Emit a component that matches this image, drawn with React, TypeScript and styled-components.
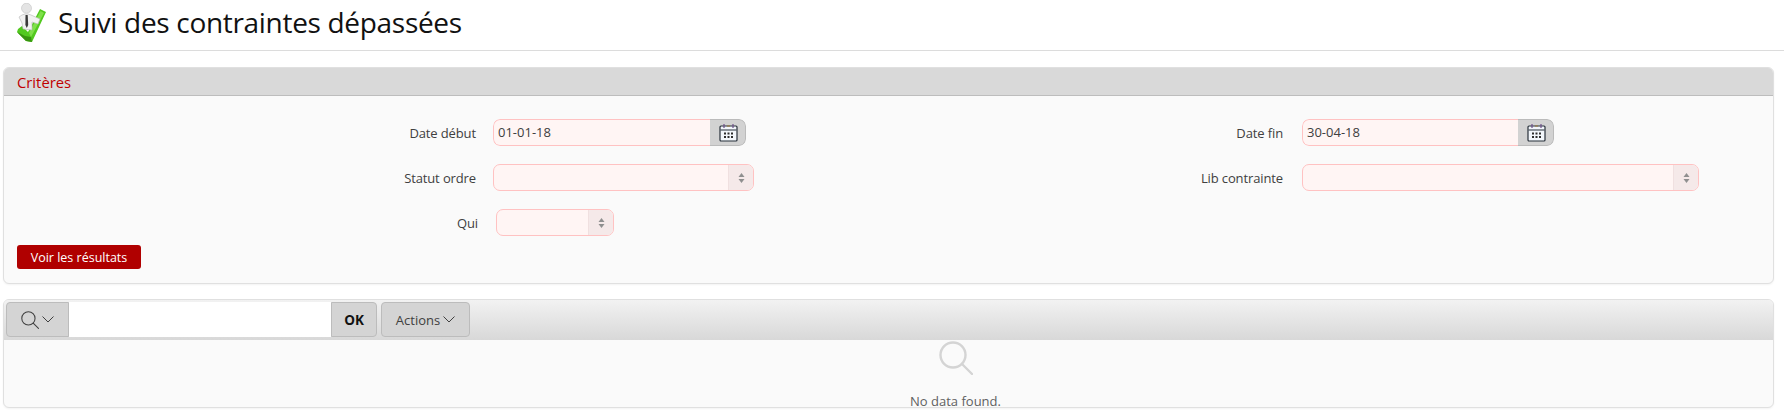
import React from 'react';
import styled, { createGlobalStyle } from 'styled-components';

const GlobalStyle = createGlobalStyle`
  html, body {
    margin: 0;
    padding: 0;
    background: #fff;
  }
  body {
    font-family: "Open Sans", "Noto Sans", "Liberation Sans", sans-serif;
    color: #404040;
  }
`;

const Page = styled.div`
  width: 1784px;
  height: 416px;
  overflow: hidden;
`;

const TitleBar = styled.header`
  height: 50px;
  border-bottom: 1px solid #dcdcdc;
  display: flex;
  align-items: flex-start;
  padding-left: 17px;
  gap: 11px;
`;

const LogoSlot = styled.div`
  margin-top: 3px;
  height: 40px;
`;

const Title = styled.h1`
  margin: 3px 0 0;
  font-size: 28px;
  line-height: 38px;
  font-weight: 400;
  color: #111;
  letter-spacing: -0.31px;
`;

const Content = styled.main`
  padding: 16px 10px 0 3px;
  display: flex;
  flex-direction: column;
  gap: 15px;
`;

const Panel = styled.section`
  background: #fafafa;
  border: 1px solid #e0e0e0;
  border-radius: 6px;
  box-shadow: 0 1px 2px rgba(0, 0, 0, 0.05);
`;

const PanelHeader = styled.div`
  height: 27px;
  background: #d9d9d9;
  border-bottom: 1px solid #bdbdbd;
  border-radius: 5px 5px 0 0;
  display: flex;
  align-items: center;
  padding-left: 13px;
`;

const PanelTitle = styled.h2`
  margin: 0;
  font-size: 14.8px;
  font-weight: 400;
  color: #c00000;
`;

const FormBody = styled.div`
  padding: 23px 0 14px;
  display: flex;
  flex-direction: column;
`;

const FormGrid = styled.div`
  display: grid;
  grid-template-columns: 809px 1fr;
  row-gap: 18px;
`;

const Field = styled.div<{ $labelWidth: number; $gap: number }>`
  display: grid;
  grid-template-columns: ${p => p.$labelWidth}px auto 1fr;
  column-gap: ${p => p.$gap}px;
  align-items: center;
  height: 27px;
`;

const FieldLabel = styled.label`
  font-size: 13px;
  letter-spacing: -0.12px;
  color: #404040;
  text-align: right;
`;

const DateBox = styled.div<{ $inputWidth: number }>`
  display: flex;
  height: 27px;
  width: ${p => p.$inputWidth + 36}px;
  box-sizing: border-box;
  border-radius: 7px;
  overflow: hidden;
`;

const DateInput = styled.div`
  flex: 1;
  box-sizing: border-box;
  background: #fff5f4;
  border: 1px solid #ffc2c2;
  border-right: none;
  border-radius: 7px 0 0 7px;
  padding-left: 4px;
  font-size: 13px;
  line-height: 25px;
  color: #404040;
`;

const CalendarButton = styled.div`
  width: 36px;
  box-sizing: border-box;
  background: #d2d2d2;
  border: 1px solid #bbb;
  border-left: none;
  border-radius: 0 7px 7px 0;
  padding-left: 1px;
  display: flex;
  align-items: center;
  justify-content: center;
`;

const SelectBox = styled.div<{ $width: number }>`
  display: flex;
  justify-content: flex-end;
  height: 27px;
  width: ${p => p.$width}px;
  box-sizing: border-box;
  background: #fff5f4;
  border: 1px solid #ffc2c2;
  border-radius: 7px;
  overflow: hidden;
`;

const SelectArrow = styled.div`
  width: 24px;
  background: #f5e9e9;
  border-left: 1px solid #f0e0e0;
  display: flex;
  align-items: center;
  justify-content: center;
`;

const PrimaryButton = styled.button`
  align-self: flex-start;
  margin: 9px 0 0 13px;
  width: 124px;
  height: 24px;
  padding: 0;
  border: none;
  border-radius: 3px;
  background: #b00000;
  color: #fff;
  font-family: inherit;
  font-size: 12.5px;
`;

const Toolbar = styled.div`
  height: 35px;
  padding: 2px 0 3px 2px;
  background: linear-gradient(#f2f2f2, #d8d8d8);
  border-radius: 5px 5px 0 0;
  display: flex;
  align-items: stretch;
`;

const ToolButton = styled.div<{ $side?: 'left' | 'right' | 'both' }>`
  display: flex;
  align-items: center;
  justify-content: center;
  box-sizing: border-box;
  background: #d4d4d4;
  border: 1px solid #bcbcbc;
  color: #404040;
  font-size: 13px;
  border-radius: ${p =>
    p.$side === 'left' ? '4px 0 0 4px' : p.$side === 'right' ? '0 4px 4px 0' : '4px'};
`;

const SearchToggle = styled(ToolButton)`
  width: 63px;
  gap: 3px;
`;

const SearchInput = styled.div`
  width: 262px;
  background: #fff;
`;

const GoButton = styled(ToolButton)`
  width: 46px;
  color: #111;
  font-size: 13.5px;
  font-weight: 700;
`;

const ActionsButton = styled(ToolButton)`
  width: 89px;
  margin-left: 4px;
  gap: 3px;
`;

const EmptyState = styled.div`
  height: 67px;
  padding-left: 134px;
  display: flex;
  flex-direction: column;
  align-items: center;
`;

const EmptyIcon = styled.div`
  height: 35px;
  margin-top: 1px;
`;

const EmptyText = styled.div`
  margin-top: 19px;
  font-size: 13px;
  line-height: 12px;
  color: #606060;
`;

const LogoIcon = () => (
  <svg width="30" height="40" viewBox="0 0 30 40">
    <path d="M23 6 L29 9 L15 39 L9 38 L0 29 L1 26 L5 23 L11 29 Z" fill="#52c91f" />
    <path d="M0 29 L9 38 L15 39 L14 34 L8 33 Z" fill="#37940f" />
    <path d="M23.5 8 L27 10 L14 34 L12 30 Z" fill="#7fe04a" />
    <path d="M2 14 Q8 9 14 12 L23 16 L21 21 L15 19 L15 27 L6 26 L5 20 Z" fill="#f2f2f2" stroke="#b5b5b5" strokeWidth="0.6" />
    <path d="M8.5 12 L10.7 12 L11.2 22 L9.8 25 L8.4 22 Z" fill="#3a3a3a" />
    <circle cx="9.5" cy="5.2" r="5" fill="#e4e4e4" stroke="#b8b8b8" strokeWidth="0.5" />
  </svg>
);

const CalendarIcon = () => (
  <svg width="19" height="19" viewBox="0 0 19 19">
    <rect x="1" y="3" width="17" height="15" rx="1" fill="#f2f6fb" stroke="#27303a" strokeWidth="1.2" />
    <path d="M1.5 7h16" stroke="#27303a" strokeWidth="1" />
    <path d="M5 1v4M14 1v4" stroke="#6d4f8a" strokeWidth="1.2" />
    <path d="M8 3h3" stroke="#a07a3a" strokeWidth="1" />
    <path d="M5 10.5h2M8.5 10.5h2M12 10.5h2M5 14h2M8.5 14h2M12 14h2" stroke="#2d2d2d" strokeWidth="2" />
  </svg>
);

const SortArrows = () => (
  <svg width="7" height="10" viewBox="0 0 7 10">
    <path d="M3.5 0 L6.5 4 H0.5 Z M3.5 10 L0.5 6 H6.5 Z" fill="#8f8f8f" />
  </svg>
);

const SearchIcon = ({ size, color, width }: { size: number; color: string; width: number }) => (
  <svg width={size} height={size} viewBox="0 0 34 34">
    <circle cx="14" cy="14" r="12.5" fill="none" stroke={color} strokeWidth={width} />
    <path d="M23 23 L33 33" stroke={color} strokeWidth={width} strokeLinecap="round" />
  </svg>
);

const ChevronIcon = () => (
  <svg width="12" height="7" viewBox="0 0 12 7">
    <path d="M0.5 0.5 L6 6 L11.5 0.5" fill="none" stroke="#404040" strokeWidth="1" />
  </svg>
);

const DateField = ({ label, value, labelWidth, gap, inputWidth }: {
  label: string; value: string; labelWidth: number; gap: number; inputWidth: number;
}) => (
  <Field $labelWidth={labelWidth} $gap={gap}>
    <FieldLabel>{label}</FieldLabel>
    <DateBox $inputWidth={inputWidth}>
      <DateInput>{value}</DateInput>
      <CalendarButton><CalendarIcon /></CalendarButton>
    </DateBox>
  </Field>
);

const SelectField = ({ label, labelWidth, gap, width }: {
  label: string; labelWidth: number; gap: number; width: number;
}) => (
  <Field $labelWidth={labelWidth} $gap={gap}>
    <FieldLabel>{label}</FieldLabel>
    <SelectBox $width={width}>
      <SelectArrow><SortArrows /></SelectArrow>
    </SelectBox>
  </Field>
);

export default function App() {
  return (
    <Page>
      <GlobalStyle />
      <TitleBar>
        <LogoSlot><LogoIcon /></LogoSlot>
        <Title>Suivi des contraintes dépassées</Title>
      </TitleBar>
      <Content>
        <Panel>
          <PanelHeader>
            <PanelTitle>Critères</PanelTitle>
          </PanelHeader>
          <FormBody>
            <FormGrid>
              <DateField label="Date début" value="01-01-18" labelWidth={472} gap={17} inputWidth={217} />
              <DateField label="Date fin" value="30-04-18" labelWidth={470} gap={19} inputWidth={216} />
              <SelectField label="Statut ordre" labelWidth={472} gap={17} width={261} />
              <SelectField label="Lib contrainte" labelWidth={470} gap={19} width={397} />
              <SelectField label="Qui" labelWidth={474} gap={18} width={118} />
            </FormGrid>
            <PrimaryButton>Voir les résultats</PrimaryButton>
          </FormBody>
        </Panel>
        <Panel>
          <Toolbar>
            <SearchToggle $side="left">
              <SearchIcon size={18} color="#404040" width={2} />
              <ChevronIcon />
            </SearchToggle>
            <SearchInput />
            <GoButton $side="right">OK</GoButton>
            <ActionsButton>Actions <ChevronIcon /></ActionsButton>
          </Toolbar>
          <EmptyState>
            <EmptyIcon><SearchIcon size={34} color="#d4d4d4" width={2.4} /></EmptyIcon>
            <EmptyText>No data found.</EmptyText>
          </EmptyState>
        </Panel>
      </Content>
    </Page>
  );
}
